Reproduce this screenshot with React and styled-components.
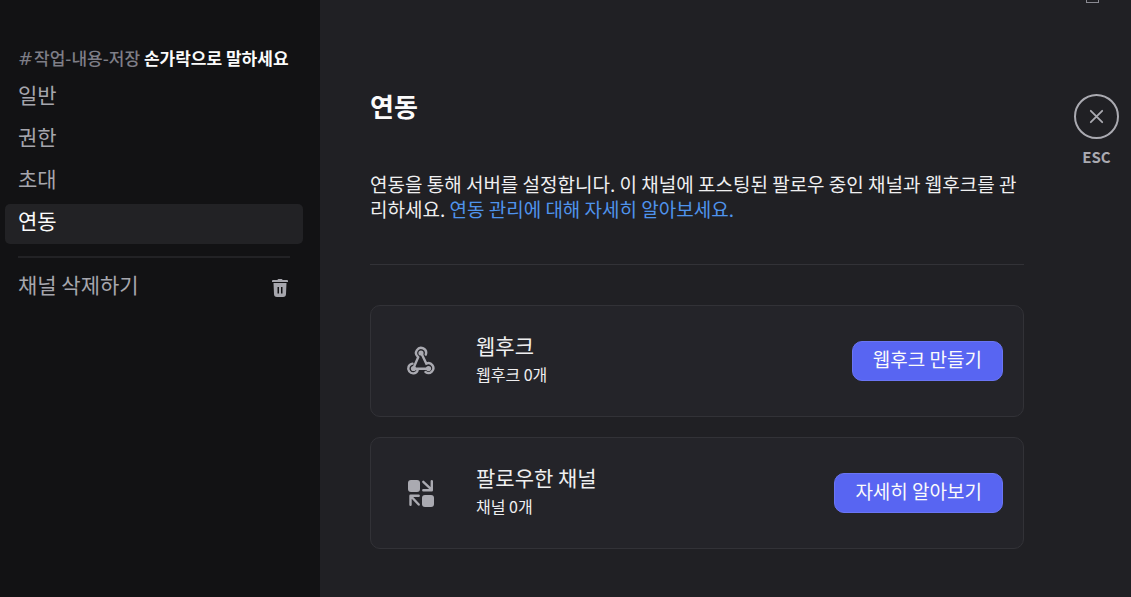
import React, { useState } from 'react';
import styled, { createGlobalStyle } from 'styled-components';

const GlobalStyle = createGlobalStyle`
  * {
    box-sizing: border-box;
  }

  body {
    margin: 0;
    background: #202024;
    color: #efeff0;
    font-family: 'Noto Sans CJK KR', sans-serif;
  }

  button {
    font-family: inherit;
    cursor: pointer;
  }
`;

const tabs = ['일반', '권한', '초대', '연동'];

const TrashIcon = () => (
  <svg width="20" height="20" viewBox="0 0 20 20" fill="currentColor" aria-hidden="true">
    <path d="M7.500 2a1 1 0 0 1 1-1h3a1 1 0 0 1 1 1H17a1 1 0 0 1 1 1v1H2V3a1 1 0 0 1 1-1z" />
    <path
      fillRule="evenodd"
      d="M3.500 5h13l-.5 11a3 3 0 0 1-3 3H7a3 3 0 0 1-3-3zM7.500 9v6.500H9V9zM11 9v6.500h1.500V9z"
    />
  </svg>
);

const WebhookIcon = () => (
  <svg width="30" height="30" viewBox="0 0 30 30" fill="none" stroke="currentColor" strokeWidth="2.400" strokeLinecap="round" aria-hidden="true">
    <path d="M19.800 8.500A5 5 0 1 0 11.700 10.600L12.200 11.200L7.500 22" />
    <path d="M15.200 7L20.300 17.600A4.900 4.900 0 1 1 19.500 26" />
    <path d="M6.500 17.600A4.900 4.900 0 1 0 11.600 24.500M7.500 22.700H22.500" />
    <g fill="currentColor" stroke="none">
      <circle cx="15" cy="7" r="2.600" />
      <circle cx="7.500" cy="22.500" r="2.600" />
      <circle cx="22.500" cy="22.500" r="2.600" />
    </g>
  </svg>
);

const FollowIcon = () => (
  <svg width="30" height="30" viewBox="0 0 30 30" fill="currentColor" aria-hidden="true">
    <rect x="2" y="2" width="12" height="12" rx="3" />
    <rect x="16" y="17" width="12" height="12" rx="3" />
    <g fill="none" stroke="currentColor" strokeWidth="2.400" strokeLinecap="round" strokeLinejoin="round">
      <path d="M17.300 3.800l8 7.500M25.800 3.200v9.100h-8.500" />
      <path d="M12.700 26.500l-7.500-8M4.500 26.800v-9h8.200" />
    </g>
  </svg>
);

const CloseIcon = () => (
  <svg width="15" height="15" viewBox="0 0 15 15" fill="none" stroke="currentColor" strokeWidth="1.800" strokeLinecap="round" aria-hidden="true">
    <path d="M1.800 1.800l11.400 11.400M13.200 1.800L1.800 13.200" />
  </svg>
);

const cards = [
  { title: '웹후크', count: '웹후크 0개', action: '웹후크 만들기', icon: WebhookIcon },
  { title: '팔로우한 채널', count: '채널 0개', action: '자세히 알아보기', icon: FollowIcon },
];

export default function App() {
  const [active, setActive] = useState('연동');

  return (
    <Page>
      <GlobalStyle />
      <Sidebar>
        <ChannelName>
          <HashSign>#</HashSign>
          작업-내용-저장 <strong>손가락으로 말하세요</strong>
        </ChannelName>
        <Nav>
          {tabs.map(tab => (
            <NavItem key={tab} $active={tab === active} onClick={() => setActive(tab)}>
              {tab}
            </NavItem>
          ))}
          <NavDivider />
          <NavItem>
            채널 삭제하기
            <TrashIcon />
          </NavItem>
        </Nav>
      </Sidebar>
      <Main>
        <Content>
          <Title>연동</Title>
          <Description>
            연동을 통해 서버를 설정합니다. 이 채널에 포스팅된 팔로우 중인 채널과 웹후크를 관리하세요.{' '}
            <DocsLink href="#integrations">연동 관리에 대해 자세히 알아보세요.</DocsLink>
          </Description>
          <Divider />
          <CardList>
            {cards.map(({ title, count, action, icon: Icon }) => (
              <Card key={title}>
                <CardIcon>
                  <Icon />
                </CardIcon>
                <CardText>
                  <CardTitle>{title}</CardTitle>
                  <CardCount>{count}</CardCount>
                </CardText>
                <PrimaryButton>{action}</PrimaryButton>
              </Card>
            ))}
          </CardList>
        </Content>
        <Tools>
          <WindowMark />
          <CloseButton>
            <CloseRing>
              <CloseIcon />
            </CloseRing>
            ESC
          </CloseButton>
        </Tools>
      </Main>
    </Page>
  );
}

const Page = styled.div`
  display: flex;
  min-height: 100vh;
`;

const Sidebar = styled.aside`
  flex: 0 0 320px;
  padding: 46px 17px 0 5px;
  background: #121214;
`;

const ChannelName = styled.h2`
  margin: 0 0 8px;
  padding-left: 13px;
  color: #7e7e87;
  font-size: 17px;
  font-weight: 500;
  line-height: 24px;
  white-space: nowrap;

  strong {
    color: #fbfbfb;
    font-weight: 700;
  }
`;

const HashSign = styled.span`
  margin-right: 1px;
  font-family: 'DejaVu Sans', sans-serif;
  font-size: 18px;
  font-weight: 400;
  line-height: 16px;
`;

const Nav = styled.nav`
  display: flex;
  flex-direction: column;
  gap: 2px;
`;

const NavItem = styled.button`
  display: flex;
  justify-content: space-between;
  align-items: center;
  height: 40px;
  padding: 0 13px 8px;
  border: 0;
  border-radius: 5px;
  background: ${props => (props.$active ? '#222225' : 'transparent')};
  color: ${props => (props.$active ? '#fbfbfb' : '#a6a6ad')};
  font-size: 21px;
  text-align: left;

  svg {
    margin-top: 8px;
  }
`;

const NavDivider = styled.hr`
  width: 272px;
  height: 2px;
  margin: 10px 13px 8px;
  border: 0;
  background: #222225;
`;

const Main = styled.main`
  display: flex;
  flex: 1;
  min-width: 0;
`;

const Content = styled.section`
  flex: 1;
  min-width: 0;
  padding: 87px 50px 0;
`;

const Title = styled.h1`
  margin: 0 0 46px;
  font-size: 26px;
  font-weight: 700;
  line-height: 38px;
  color: #fbfbfb;
`;

const Description = styled.p`
  margin: 0;
  font-size: 19px;
  line-height: 25px;
  word-break: break-all;
`;

const DocsLink = styled.a`
  color: #4f93ec;
  text-decoration: none;
`;

const Divider = styled.hr`
  height: 1px;
  margin: 43px 0 40px;
  border: 0;
  background: #323237;
`;

const CardList = styled.div`
  display: flex;
  flex-direction: column;
  gap: 20px;
`;

const Card = styled.article`
  display: flex;
  align-items: center;
  height: 112px;
  padding: 0 20px;
  border: 1px solid #323237;
  border-radius: 10px;
  background: #242429;
`;

const CardIcon = styled.div`
  display: flex;
  justify-content: center;
  width: 60px;
  color: #aaaab1;
`;

const CardText = styled.div`
  flex: 1;
  margin-left: 25px;
`;

const CardTitle = styled.h3`
  margin: 0;
  font-size: 21px;
  font-weight: 400;
  line-height: 30px;
`;

const CardCount = styled.p`
  margin: 3px 0 8px;
  font-size: 16px;
  line-height: 22px;
`;

const PrimaryButton = styled.button`
  height: 40px;
  padding: 0 20px 6px;
  border: 1px solid #6a75f4;
  border-radius: 10px;
  background: #5865f2;
  color: #fbfbfb;
  font-size: 19px;
`;

const Tools = styled.div`
  display: flex;
  flex: 0 0 57px;
  flex-direction: column;
  align-items: flex-start;
`;

const WindowMark = styled.div`
  width: 13px;
  height: 3px;
  margin: 0 0 91px 12px;
  border: 1px solid #8a8a92;
  border-top: 0;
`;

const CloseButton = styled.button`
  display: flex;
  flex-direction: column;
  align-items: center;
  gap: 8px;
  padding: 0;
  border: 0;
  background: none;
  color: #aaaab1;
  font-size: 15px;
  font-weight: 700;
  line-height: 20px;
`;

const CloseRing = styled.span`
  display: flex;
  justify-content: center;
  align-items: center;
  width: 45px;
  height: 45px;
  border: 2px solid #aaaab1;
  border-radius: 50%;
`;
